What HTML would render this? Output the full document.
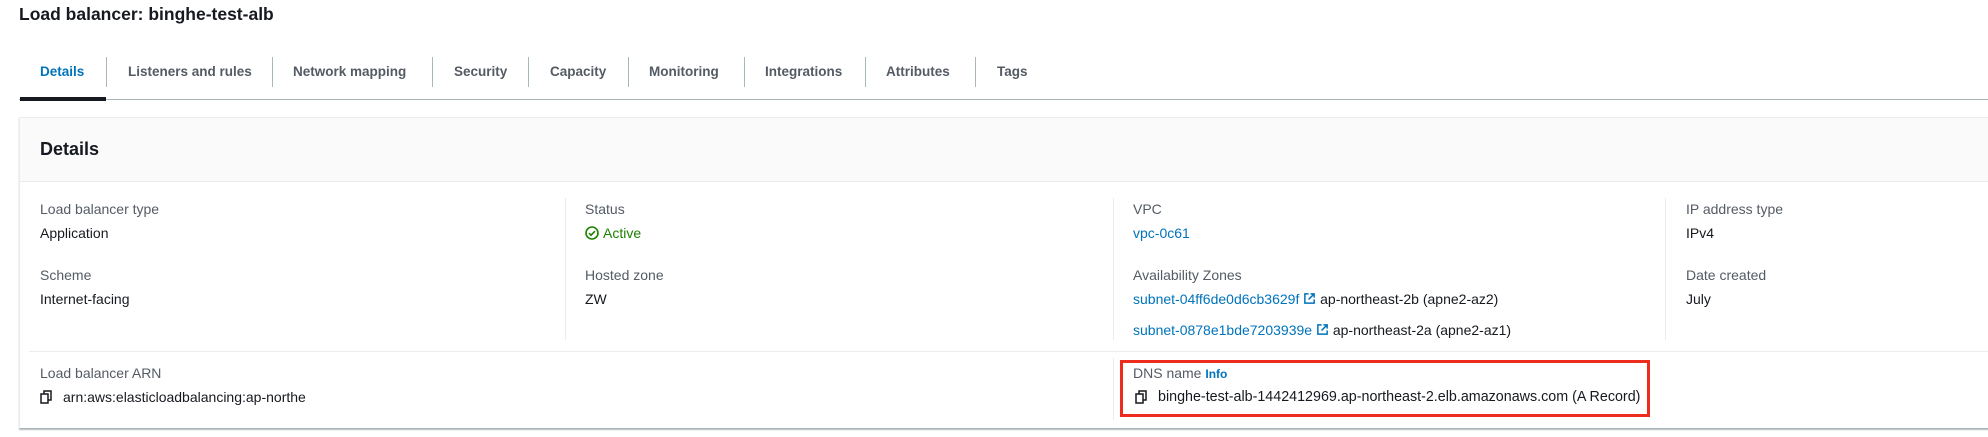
<!DOCTYPE html>
<html><head><meta charset="utf-8"><style>
body{margin:0;width:1988px;height:437px;background:#fff;font-family:"Liberation Sans",sans-serif;color:#16191f;position:relative;overflow:hidden}
.a{position:absolute;white-space:nowrap;font-size:14px;line-height:18px}
.t{position:absolute;top:63px;font-size:13.5px;font-weight:bold;color:#545b64;line-height:18px}
.sep{position:absolute;top:57px;width:1px;height:30px;background:#aab7b8}
.lbl{color:#545b64}
.lnk{color:#0073bb}
.vd{position:absolute;width:1px;background:#eaeded;top:198px;height:142px}
</style></head><body>
<div class="a" style="left:19px;top:3px;font-size:17.5px;font-weight:bold;line-height:22px">Load balancer: binghe-test-alb</div>

<div class="t" style="left:40px;color:#0073bb">Details</div>
<div class="sep" style="left:106px"></div>
<div class="t" style="left:128px">Listeners and rules</div>
<div class="sep" style="left:272px"></div>
<div class="t" style="left:293px">Network mapping</div>
<div class="sep" style="left:432px"></div>
<div class="t" style="left:454px">Security</div>
<div class="sep" style="left:528px"></div>
<div class="t" style="left:550px">Capacity</div>
<div class="sep" style="left:628px"></div>
<div class="t" style="left:649px">Monitoring</div>
<div class="sep" style="left:744px"></div>
<div class="t" style="left:765px">Integrations</div>
<div class="sep" style="left:865px"></div>
<div class="t" style="left:886px">Attributes</div>
<div class="sep" style="left:975px"></div>
<div class="t" style="left:997px">Tags</div>
<div style="position:absolute;left:19px;right:0;top:99px;height:1px;background:#aab7b8"></div>
<div style="position:absolute;left:20px;width:86px;top:97px;height:4px;background:#16191f"></div>

<div style="position:absolute;left:19px;right:-2px;top:117px;height:310px;border:1px solid #eaeded;border-bottom:1px solid #aab7b8;box-shadow:0 1px 1px rgba(0,28,36,.3)"></div>
<div style="position:absolute;left:20px;right:0;top:118px;height:63px;background:#fafafa;border-bottom:1px solid #eaeded"></div>
<div class="a" style="left:40px;top:138px;font-size:18px;font-weight:bold;line-height:22px">Details</div>

<div class="vd" style="left:565px"></div>
<div class="vd" style="left:1113px"></div>
<div class="vd" style="left:1665px"></div>

<div class="a lbl" style="left:40px;top:200px">Load balancer type</div>
<div class="a" style="left:40px;top:224px">Application</div>
<div class="a lbl" style="left:40px;top:266px">Scheme</div>
<div class="a" style="left:40px;top:290px">Internet-facing</div>

<div class="a lbl" style="left:585px;top:200px">Status</div>
<svg style="position:absolute;left:585px;top:226px" width="14" height="14" viewBox="0 0 14 14"><circle cx="7" cy="7" r="6" fill="none" stroke="#1d8102" stroke-width="1.6"/><path d="M4 7.2l2 2 4-4" fill="none" stroke="#1d8102" stroke-width="1.6"/></svg>
<div class="a" style="left:603px;top:224px;color:#1d8102">Active</div>
<div class="a lbl" style="left:585px;top:266px">Hosted zone</div>
<div class="a" style="left:585px;top:290px">ZW</div>

<div class="a lbl" style="left:1133px;top:200px">VPC</div>
<div class="a lnk" style="left:1133px;top:224px">vpc-0c61</div>
<div class="a lbl" style="left:1133px;top:266px">Availability Zones</div>
<div class="a" style="left:1133px;top:290px"><span class="lnk">subnet-04ff6de0d6cb3629f</span> <svg width="13" height="13" viewBox="0 0 14 14" style="vertical-align:-1px"><path d="M6 2H2v10h10V8M8 2h4v4M12 2L6 8" fill="none" stroke="#0073bb" stroke-width="1.6"/></svg> ap-northeast-2b (apne2-az2)</div>
<div class="a" style="left:1133px;top:321px"><span class="lnk">subnet-0878e1bde7203939e</span> <svg width="13" height="13" viewBox="0 0 14 14" style="vertical-align:-1px"><path d="M6 2H2v10h10V8M8 2h4v4M12 2L6 8" fill="none" stroke="#0073bb" stroke-width="1.6"/></svg> ap-northeast-2a (apne2-az1)</div>

<div class="a lbl" style="left:1686px;top:200px">IP address type</div>
<div class="a" style="left:1686px;top:224px">IPv4</div>
<div class="a lbl" style="left:1686px;top:266px">Date created</div>
<div class="a" style="left:1686px;top:290px">July</div>

<div style="position:absolute;left:29px;right:0;top:351px;height:1px;background:#eaeded"></div>

<div class="a lbl" style="left:40px;top:364px">Load balancer ARN</div>
<svg style="position:absolute;left:40px;top:390px" width="12" height="14" viewBox="0 0 12 14"><rect x="1" y="4" width="7" height="9" fill="none" stroke="#16191f" stroke-width="1.5"/><path d="M4 4V1h7v9H8" fill="none" stroke="#16191f" stroke-width="1.5"/></svg>
<div class="a" style="left:63px;top:388px">arn:aws:elasticloadbalancing:ap-northe</div>

<div class="vd" style="left:1113px;top:358px;height:62px"></div>
<div class="a lbl" style="left:1133px;top:364px">DNS name <span style="color:#0073bb;font-weight:bold;font-size:12px">Info</span></div>
<svg style="position:absolute;left:1135px;top:390px" width="12" height="14" viewBox="0 0 12 14"><rect x="1" y="4" width="7" height="9" fill="none" stroke="#16191f" stroke-width="1.5"/><path d="M4 4V1h7v9H8" fill="none" stroke="#16191f" stroke-width="1.5"/></svg>
<div class="a" style="left:1158px;top:388px;font-size:14.3px">binghe-test-alb-1442412969.ap-northeast-2.elb.amazonaws.com (A Record)</div>
<div style="position:absolute;left:1120px;top:360px;width:524px;height:51px;border:3px solid #ee2c1e"></div>
</body></html>
